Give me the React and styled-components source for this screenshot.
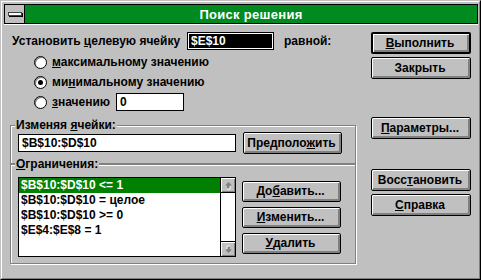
import styled, { createGlobalStyle } from "styled-components";

const GlobalStyle = createGlobalStyle`
  html, body {
    margin: 0;
    padding: 0;
    background: #c0c0c0;
  }
  * {
    box-sizing: border-box;
  }
`;

const Window = styled.div`
  width: 481px;
  height: 280px;
  border: 1px solid;
  border-color: #c0c0c0 #000 #000 #c0c0c0;
  background: #c0c0c0;
  font-family: "Liberation Sans", Arial, sans-serif;
  font-weight: bold;
  font-size: 12px;
  color: #000;
`;

const Frame = styled.div`
  height: 100%;
  border: 1px solid;
  border-color: #fff #808080 #808080 #fff;
  padding: 2px 1px 1px 2px;
  display: flex;
  flex-direction: column;
`;

const TitleBar = styled.div`
  height: 20px;
  border: 1px solid #000;
  display: flex;
`;

const SysMenu = styled.div`
  width: 20px;
  background: #c0c0c0;
  border-right: 1px solid #000;
  display: flex;
  align-items: center;
  justify-content: center;
`;

const SysBar = styled.div`
  width: 14px;
  height: 4px;
  background: #fff;
  border: 1px solid #404040;
  box-shadow: 1px 1px 0 #000;
  margin-top: -1px;
`;

const Title = styled.div`
  flex: 1;
  background: #008a20;
  color: #fff;
  font-size: 13px;
  display: flex;
  align-items: center;
  justify-content: center;
  letter-spacing: 0.3px;
`;

const Client = styled.div`
  flex: 1;
  display: flex;
  padding: 7px 0 0 6px;
  border-top: 1px solid #fff;
`;

const LeftColumn = styled.div`
  width: 346px;
  display: flex;
  flex-direction: column;
`;

const RightColumn = styled.div`
  width: 100px;
  margin-left: 15px;
  display: flex;
  flex-direction: column;
`;

const TargetRow = styled.div`
  height: 18px;
  display: flex;
  align-items: center;
`;

const TargetLabel = styled.span`
  width: 177px;
  padding-left: 2px;
`;

const TargetField = styled.div`
  width: 87px;
  height: 18px;
  border: 1px solid #000;
  background: #000;
  box-shadow: inset 0 0 0 1px #fff;
  color: #fff;
  padding: 0 3px;
  line-height: 16px;
`;

const EqualLabel = styled.span`
  margin-left: 10px;
`;

const RadioList = styled.div`
  margin-top: 2px;
  display: flex;
  flex-direction: column;
`;

const RadioRow = styled.div`
  height: 20px;
  display: flex;
  align-items: center;
  padding-left: 24px;
`;

const RadioCircle = styled.span`
  width: 13px;
  height: 13px;
  border-radius: 50%;
  border: 1px solid #000;
  background: #fff;
  box-shadow: inset 1px 1px 0 #808080;
  display: flex;
  align-items: center;
  justify-content: center;
  margin-right: 5px;
  &::after {
    content: "";
    width: 5px;
    height: 5px;
    border-radius: 50%;
    background: ${(p) => (p.$checked ? "#000" : "transparent")};
  }
`;

const Edit = styled.div`
  width: ${(p) => p.$width}px;
  height: 18px;
  border: 1px solid #000;
  background: #fff;
  padding: 0 3px;
  line-height: 16px;
  margin-left: ${(p) => p.$gap || 0}px;
`;

const Group = styled.fieldset`
  margin: ${(p) => p.$top}px 0 0;
  padding: 0 0 ${(p) => p.$bottom}px 7px;
  border: 1px solid #808080;
  box-shadow: inset 1px 1px 0 #fff, 1px 1px 0 #fff;
  min-inline-size: 0;
  width: 346px;
`;

const Legend = styled.legend`
  margin-left: -3px;
  padding: 0 1px;
  line-height: 14px;
  background: #c0c0c0;
`;

const GroupRow = styled.div`
  display: flex;
  align-items: ${(p) => p.$align || "center"};
  margin-top: ${(p) => p.$top || 0}px;
`;

const ButtonStack = styled.div`
  display: flex;
  flex-direction: column;
  gap: 5px;
  margin-left: 6px;
  padding-top: 4px;
`;

const Button = styled.button`
  width: ${(p) => p.$width || 100}px;
  height: ${(p) => p.$height || 22}px;
  margin-top: ${(p) => p.$top || 0}px;
  margin-left: ${(p) => p.$left || 0}px;
  padding: 0 2px 1px 0;
  font: inherit;
  color: #000;
  background: #c0c0c0;
  border: ${(p) => (p.$default ? 2 : 1)}px solid #000;
  border-radius: 2px;
  box-shadow: inset 1px 1px 0 #fff, inset -2px -2px 0 #808080;
  display: flex;
  align-items: center;
  justify-content: center;
  cursor: default;
`;

const Key = styled.span`
  text-decoration: underline;
  text-underline-offset: 1px;
`;

const ListBox = styled.div`
  width: 218px;
  height: 80px;
  border: 1px solid #000;
  background: #fff;
  display: flex;
`;

const ListItems = styled.div`
  flex: 1;
  display: flex;
  flex-direction: column;
`;

const ListItem = styled.div`
  height: 15px;
  line-height: 15px;
  padding-left: 2px;
  background: ${(p) => (p.$selected ? "#008000" : "transparent")};
  color: ${(p) => (p.$selected ? "#fff" : "#000")};
`;

const ScrollBar = styled.div`
  width: 15px;
  border-left: 1px solid #000;
  display: flex;
  flex-direction: column;
  justify-content: space-between;
`;

const ScrollButton = styled.div`
  height: 15px;
  background: #c0c0c0;
  border-${(p) => (p.$down ? "top" : "bottom")}: 1px solid #000;
  box-shadow: inset 1px 1px 0 #fff, inset -1px -1px 0 #808080;
  display: flex;
  align-items: center;
  justify-content: center;
`;

const Arrow = ({ down }) => (
  <svg width="9" height="9" viewBox="0 0 9 9" style={down ? { transform: "rotate(180deg)" } : undefined}>
    <path d="M4.5 1 L8 4.5 L6 4.5 L6 8 L3 8 L3 4.5 L1 4.5 Z" fill="#808080" />
    <path d="M6 5 L6 8 L3 8" fill="none" stroke="#fff" strokeWidth="1" />
  </svg>
);

const constraints = [
  "$B$10:$D$10 <= 1",
  "$B$10:$D$10 = целое",
  "$B$10:$D$10 >= 0",
  "$E$4:$E$8 = 1",
];

export default function App() {
  return (
    <>
      <GlobalStyle />
      <Window>
        <Frame>
          <TitleBar>
            <SysMenu>
              <SysBar />
            </SysMenu>
            <Title>Поиск решения</Title>
          </TitleBar>
          <Client>
            <LeftColumn>
              <TargetRow>
                <TargetLabel>
                  Установить <Key>ц</Key>елевую ячейку
                </TargetLabel>
                <TargetField>$E$10</TargetField>
                <EqualLabel>равной:</EqualLabel>
              </TargetRow>
              <RadioList>
                <RadioRow>
                  <RadioCircle />
                  <span>
                    <Key>м</Key>аксимальному значению
                  </span>
                </RadioRow>
                <RadioRow>
                  <RadioCircle $checked />
                  <span>
                    ми<Key>н</Key>имальному значению
                  </span>
                </RadioRow>
                <RadioRow>
                  <RadioCircle />
                  <span>
                    <Key>з</Key>начению
                  </span>
                  <Edit $width={68} $gap={6}>
                    0
                  </Edit>
                </RadioRow>
              </RadioList>
              <Group $top={6} $bottom={9}>
                <Legend>
                  Изменяя <Key>я</Key>чейки:
                </Legend>
                <GroupRow>
                  <Edit $width={218}>$B$10:$D$10</Edit>
                  <Button $width={99} $height={22} $left={7}>
                    Предполо<Key>ж</Key>ить
                  </Button>
                </GroupRow>
              </Group>
              <Group $top={-7} $bottom={6}>
                <Legend>
                  <Key>О</Key>граничения:
                </Legend>
                <GroupRow $align="flex-start" $top={6}>
                  <ListBox>
                    <ListItems>
                      {constraints.map((c, i) => (
                        <ListItem key={c} $selected={i === 0}>
                          {c}
                        </ListItem>
                      ))}
                    </ListItems>
                    <ScrollBar>
                      <ScrollButton>
                        <Arrow />
                      </ScrollButton>
                      <ScrollButton $down>
                        <Arrow down />
                      </ScrollButton>
                    </ScrollBar>
                  </ListBox>
                  <ButtonStack>
                    <Button $width={99} $height={21}>
                      До<Key>б</Key>авить...
                    </Button>
                    <Button $width={99} $height={21}>
                      <Key>И</Key>зменить...
                    </Button>
                    <Button $width={99} $height={21}>
                      <Key>У</Key>далить
                    </Button>
                  </ButtonStack>
                </GroupRow>
              </Group>
            </LeftColumn>
            <RightColumn>
              <Button $default>
                <Key>В</Key>ыполнить
              </Button>
              <Button $top={3}>Закрыть</Button>
              <Button $top={38}>
                <Key>П</Key>араметры...
              </Button>
              <Button $top={30}>
                Восс<Key>т</Key>ановить
              </Button>
              <Button $top={3}>
                <Key>С</Key>правка
              </Button>
            </RightColumn>
          </Client>
        </Frame>
      </Window>
    </>
  );
}
